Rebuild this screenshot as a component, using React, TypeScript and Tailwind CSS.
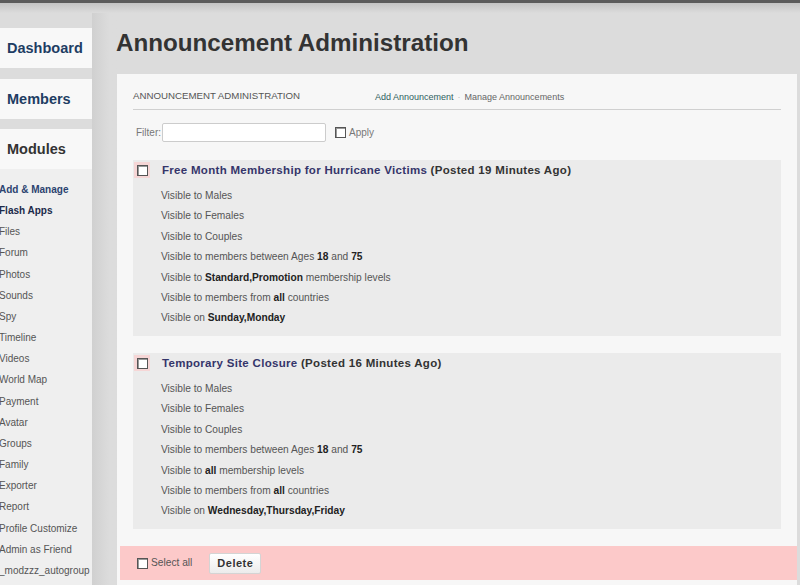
import React from 'react';

const modules = [
  'Files',
  'Forum',
  'Photos',
  'Sounds',
  'Spy',
  'Timeline',
  'Videos',
  'World Map',
  'Payment',
  'Avatar',
  'Groups',
  'Family',
  'Exporter',
  'Report',
  'Profile Customize',
  'Admin as Friend',
  '_modzzz_autogroup',
];

interface Announcement {
  title: string;
  posted: string;
  lines: React.ReactNode[];
}

const announcements: Announcement[] = [
  {
    title: 'Free Month Membership for Hurricane Victims',
    posted: '(Posted 19 Minutes Ago)',
    lines: [
      'Visible to Males',
      'Visible to Females',
      'Visible to Couples',
      <>Visible to members between Ages <b className="text-[#222]">18</b> and <b className="text-[#222]">75</b></>,
      <>Visible to <b className="text-[#222]">Standard,Promotion</b> membership levels</>,
      <>Visible to members from <b className="text-[#222]">all</b> countries</>,
      <>Visible on <b className="text-[#222]">Sunday,Monday</b></>,
    ],
  },
  {
    title: 'Temporary Site Closure',
    posted: '(Posted 16 Minutes Ago)',
    lines: [
      'Visible to Males',
      'Visible to Females',
      'Visible to Couples',
      <>Visible to members between Ages <b className="text-[#222]">18</b> and <b className="text-[#222]">75</b></>,
      <>Visible to <b className="text-[#222]">all</b> membership levels</>,
      <>Visible to members from <b className="text-[#222]">all</b> countries</>,
      <>Visible on <b className="text-[#222]">Wednesday,Thursday,Friday</b></>,
    ],
  },
];

function Check({ pink = false }: { pink?: boolean }) {
  return (
    <span className={`flex items-center justify-center w-[16px] h-[16px] ${pink ? 'bg-[#f6d6d6]' : ''}`}>
      <span className="block w-[11px] h-[11px] border border-[#555] bg-white shadow-[inset_1px_1px_0_#999]" />
    </span>
  );
}

function NavBox({ label, color }: { label: string; color: string }) {
  return (
    <div className={`h-[40px] w-[92px] bg-[#f8f8f8] flex items-center pl-[7px] pt-[1px] text-[14.5px] font-bold ${color}`}>
      {label}
    </div>
  );
}

export default function App() {
  return (
    <div
      className="w-[800px] h-[585px] overflow-hidden bg-[#dcdcdc] flex flex-col"
      style={{ fontFamily: '"Liberation Sans", Arial, sans-serif' }}
    >
      <div className="h-[3px] bg-[#5c5c5c] shrink-0" />
      <div className="h-[10px] bg-gradient-to-b from-[#c4c4c4] to-[#dcdcdc] shrink-0" />
      <div className="flex flex-1 min-h-0">
        {/* Sidebar */}
        <div className="w-[92px] shrink-0 pt-[15px] flex flex-col">
          <NavBox label="Dashboard" color="text-[#1e3d63]" />
          <div className="h-[11px]" />
          <NavBox label="Members" color="text-[#1e3d63]" />
          <div className="h-[10px]" />
          <NavBox label="Modules" color="text-[#333]" />
          <div className="flex-1 bg-[#efefef] pt-[10px] text-[10px] leading-[21.15px] text-[#555] -ml-[1px]">
            <div className="font-bold text-[#2b4370]">Add &amp; Manage</div>
            <div className="font-bold text-[#1b2a4a]">Flash Apps</div>
            {modules.map((m) => (
              <div key={m} className="whitespace-nowrap">{m}</div>
            ))}
          </div>
        </div>
        <div className="w-[25px] shrink-0 bg-gradient-to-r from-[#d0d0d0] to-[#dcdcdc] to-70%" />

        {/* Main */}
        <div className="flex-1 min-w-0 flex flex-col pr-[3px]">
          <h1 className="text-[24.2px] font-bold text-[#333] h-[61px] pt-[15px] leading-[30px] -ml-[1px]">
            Announcement Administration
          </h1>
          <div className="bg-[#f7f7f7] flex-1 flex flex-col">
            <div className="px-[16px]">
              <div className="flex items-end h-[36px] pb-[5px] border-b border-[#d0d0d0]">
                <span className="text-[#555] text-[9.7px] uppercase w-[242px]">Announcement Administration</span>
                <span className="text-[#2f6060] text-[9px]">Add Announcement</span>
                <span className="text-[#bbb] text-[9px] mx-[4px]">·</span>
                <span className="text-[#666] text-[9px]">Manage Announcements</span>
              </div>
              <div className="flex items-center h-[44px] mb-[6px] pl-[3px] text-[10px] text-[#777]">
                <span>Filter:</span>
                <input className="ml-[1px] w-[164px] h-[19px] bg-white border border-[#ccc] rounded-[2px]" />
                <span className="ml-[6px]"><Check /></span>
                <span className="ml-[1px]">Apply</span>
              </div>
              <div className="flex flex-col gap-[17px]">
                {announcements.map((a) => (
                  <div key={a.title} className="bg-[#ebebeb] h-[176px] pt-[2px]">
                    <div className="flex items-center h-[16px] pl-[1px]">
                      <Check pink />
                      <span className="ml-[12px] mt-[1px] text-[11.5px] font-bold tracking-[0.3px] text-[#333]">
                        <span className="text-[#35356a]">{a.title}</span> {a.posted}
                      </span>
                    </div>
                    <div className="pl-[28px] pt-[8px] text-[10.2px] leading-[20.4px] text-[#555]">
                      {a.lines.map((l, i) => (
                        <div key={i}>{l}</div>
                      ))}
                    </div>
                  </div>
                ))}
              </div>
            </div>
            <div className="mt-[17px] ml-[3px] h-[34px] bg-[#fcc9c9] flex items-center pl-[14px]">
              <Check />
              <span className="ml-[1px] text-[10.2px] text-[#555]">Select all</span>
              <button className="ml-[17px] h-[21px] w-[52px] bg-gradient-to-b from-white to-[#ececec] border border-[#d4d4d4] rounded-[2px] text-[11px] font-bold tracking-[0.5px] text-[#333]">
                Delete
              </button>
            </div>
          </div>
        </div>
      </div>
    </div>
  );
}
